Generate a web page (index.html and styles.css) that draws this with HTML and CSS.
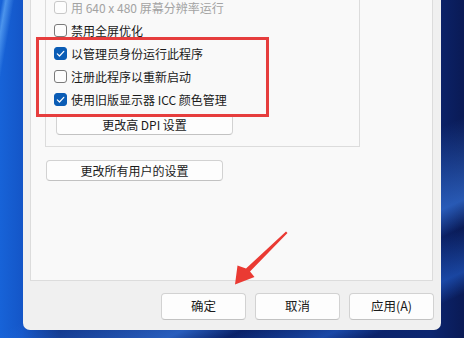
FILE: index.html
```html
<!DOCTYPE html>
<html lang="zh-CN">
<head>
<meta charset="utf-8">
<link rel="stylesheet" href="styles.css">
</head>
<body>
<div class="desktop">
  <div class="dialog">
    <div class="panel">
      <div class="group">
        <div class="row disabled"><span class="cb"></span><span>用 640 x 480 屏幕分辨率运行</span></div>
        <div class="row"><span class="cb"></span><span>禁用全屏优化</span></div>
        <div class="row"><span class="cb checked"><svg viewBox="0 0 13 13" width="13" height="13"><path d="M3.3 6.8 L5.5 9 L9.8 4.3" fill="none" stroke="#fff" stroke-width="1.2" stroke-linecap="round" stroke-linejoin="round"/></svg></span><span>以管理员身份运行此程序</span></div>
        <div class="row"><span class="cb"></span><span>注册此程序以重新启动</span></div>
        <div class="row"><span class="cb checked"><svg viewBox="0 0 13 13" width="13" height="13"><path d="M3.3 6.8 L5.5 9 L9.8 4.3" fill="none" stroke="#fff" stroke-width="1.2" stroke-linecap="round" stroke-linejoin="round"/></svg></span><span>使用旧版显示器 ICC 颜色管理</span></div>
        <button class="btn dpi">更改高 DPI 设置</button>
      </div>
      <button class="btn allusers">更改所有用户的设置</button>
    </div>
    <div class="actions">
      <button class="btn act">确定</button>
      <button class="btn act">取消</button>
      <button class="btn act">应用(A)</button>
    </div>
  </div>
  <div class="highlight"></div>
  <svg class="arrow" viewBox="0 0 464 338" width="464" height="338">
    <polygon points="286,231.5 287.5,233 250,271.5 254.5,277 235,284.5 237.5,265.5 246,268.5" fill="#ea3a33"/>
  </svg>
</div>
</body>
</html>
```

FILE: styles.css
```css
html, body {
  margin: 0;
  padding: 0;
  width: 464px;
  height: 338px;
  overflow: hidden;
}
body {
  font-family: "Noto Sans CJK SC", "Microsoft YaHei", sans-serif;
  font-size: 12px;
  color: #1a1a1a;
}
.desktop {
  position: relative;
  width: 464px;
  height: 338px;
  overflow: hidden;
  background:
    linear-gradient(100deg, transparent 0 2px, rgba(120,190,255,0.55) 6px, transparent 14px) 0 0 / 24px 338px no-repeat,
    linear-gradient(155deg, transparent 60%, rgba(60,130,240,0.6) 75%, transparent 80%, rgba(40,110,230,0.5) 88%, transparent 92%),
    linear-gradient(90deg, #1763d8 0px, #1456c8 22px, #0b2b7a 60px, #0a1f63 300px, #0c2670 430px, #0a1a55 464px);
}
.dialog {
  margin-left: 23px;
  width: 418px;
  height: 330px;
  background: #f0f0f0;
  border-radius: 0 0 7px 7px;
  display: flex;
  flex-direction: column;
  box-sizing: border-box;
  padding: 0 8px 0 7px;
}
.panel {
  height: 281px;
  box-sizing: border-box;
  background: #f9f9f9;
  border: 1px solid #dcdcdc;
  border-top: none;
  padding-left: 14px;
  display: flex;
  flex-direction: column;
  align-items: flex-start;
}
.group {
  margin-top: -4px;
  width: 315px;
  box-sizing: border-box;
  border: 1px solid #dcdcdc;
  border-top: none;
  padding: 0 0 11px 8px;
  display: flex;
  flex-direction: column;
  align-items: flex-start;
}
.row {
  height: 23px;
  display: flex;
  align-items: center;
  gap: 4px;
  white-space: nowrap;
}
.cb {
  width: 13px;
  height: 13px;
  box-sizing: border-box;
  border: 1px solid #7a7a7a;
  border-radius: 3px;
  background: #fdfdfd;
  display: flex;
}
.cb.checked {
  border-color: #0a5cb5;
  background: #0a5cb5;
}
.cb svg { display: block; margin: -1px; }
.disabled { color: #a3a3a3; }
.disabled .cb { border-color: #c8c8c8; }
.btn {
  font-family: inherit;
  font-size: 12px;
  color: #1a1a1a;
  background: #fdfdfd;
  border: 1px solid #d2d2d2;
  border-bottom-color: #c2c2c2;
  border-radius: 4px;
  padding: 0;
  line-height: 1;
  display: flex;
  align-items: center;
  justify-content: center;
}
.dpi {
  margin-top: 3px;
  margin-left: 2px;
  width: 177px;
  height: 21px;
}
.allusers {
  margin-top: 13px;
  margin-left: 1px;
  width: 177px;
  height: 21px;
}
.actions {
  margin-top: 12px;
  margin-right: -1px;
  display: flex;
  justify-content: flex-end;
  gap: 9px;
}
.act {
  width: 85px;
  height: 27px;
  font-size: 12.5px;
}
.highlight {
  position: absolute;
  left: 36px;
  top: 37px;
  width: 233px;
  height: 80px;
  box-sizing: border-box;
  border: 3px solid #e63d3d;
}
.arrow {
  position: absolute;
  left: 0;
  top: 0;
}
```
